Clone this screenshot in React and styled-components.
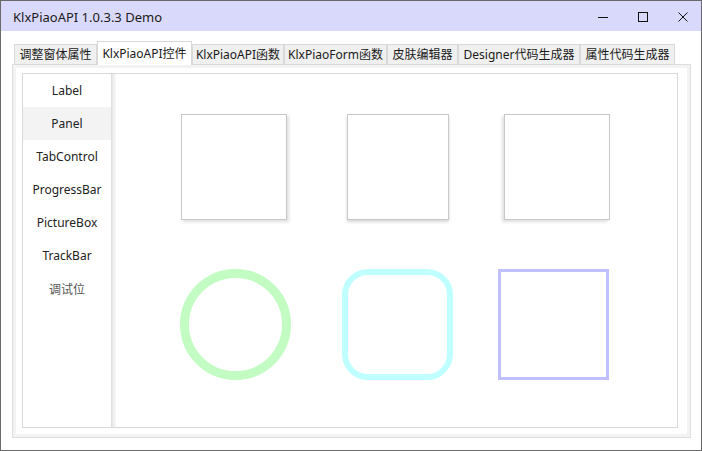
import React, { useState } from "react";
import styled, { createGlobalStyle } from "styled-components";

const GlobalStyle = createGlobalStyle`
  html, body { margin: 0; padding: 0; background: #ffffff; }
  body { font-family: "Noto Sans", "Noto Sans CJK SC", sans-serif; }
  * { box-sizing: border-box; }
`;

const Window = styled.div`
  width: 702px;
  height: 451px;
  border: 1px solid #6a6a6a;
  background: #ffffff;
  display: flex;
  flex-direction: column;
  overflow: hidden;
`;

const TitleBar = styled.div`
  height: 30px;
  flex: none;
  background: #d9d9fb;
  display: flex;
  align-items: center;
  justify-content: space-between;
  padding: 0 13px 0 12px;
`;

const Title = styled.div`
  font-size: 13px;
  line-height: 16px;
  color: #1a1a1a;
  margin-top: 1px;
`;

const Controls = styled.div`
  display: flex;
  align-items: center;
  gap: 30px;
`;

const CtrlIcon = styled.svg`
  width: 10px;
  height: 10px;
  display: block;
  margin-top: 2px;
`;

const Body = styled.div`
  flex: 1;
  display: flex;
  flex-direction: column;
  padding: 10px 0 0 11px;
`;

const TabStrip = styled.div`
  display: flex;
  align-items: flex-end;
  height: 24px;
  padding-left: 2px;
  margin-bottom: -1px;
  position: relative;
  z-index: 1;
`;

const Tab = styled.div`
  width: ${(p) => p.$w}px;
  height: ${(p) => (p.$active ? 24 : 21)}px;
  margin-right: ${(p) => p.$gap}px;
  border: 1px solid #d9d9d9;
  border-bottom: ${(p) => (p.$active ? "none" : "1px solid #d9d9d9")};
  background: ${(p) => (p.$active ? "#ffffff" : "#f0f0f0")};
  font-size: 12px;
  line-height: 16px;
  color: #1a1a1a;
  display: flex;
  justify-content: center;
  align-items: ${(p) => (p.$active ? "flex-start" : "center")};
  padding-top: ${(p) => (p.$active ? 4 : 0)}px;
  white-space: nowrap;
`;

const TabPage = styled.div`
  width: 679px;
  height: 374px;
  border: 1px solid #dedede;
  box-shadow: inset 0 0 0 3px #f3f3f3;
  background: #ffffff;
  padding: 8px 0 0 9px;
`;

const Inner = styled.div`
  width: 656px;
  height: 355px;
  border: 1px solid #d9d9d9;
  display: flex;
`;

const Sidebar = styled.div`
  width: 88px;
  flex: none;
  display: flex;
  flex-direction: column;
`;

const NavItem = styled.div`
  height: 33px;
  display: flex;
  align-items: center;
  justify-content: center;
  font-size: 12px;
  color: ${(p) => (p.$muted ? "#555" : "#222")};
  background: ${(p) => (p.$active ? "#f3f3f3" : "transparent")};
  cursor: pointer;
`;

const Divider = styled.div`
  width: 5px;
  flex: none;
  background: linear-gradient(to right, #dadada, #ededed 40%, #f8f8f8);
`;

const Canvas = styled.div`
  flex: 1;
  display: grid;
  grid-template-columns: repeat(3, 161px);
  grid-template-rows: 106px 111px;
  row-gap: 49px;
  padding: 40px 0 0 38px;
  align-content: start;
`;

const Cell = styled.div`
  display: flex;
  justify-content: center;
  transform: translateX(${(p) => p.$dx || 0}px);
`;

const Card = styled.div`
  width: ${(p) => p.$w}px;
  height: 106px;
  border: 1px solid #c8c8c8;
  background: #ffffff;
  box-shadow: ${(p) => p.$shadow};
`;

const Ring = styled.div`
  width: 111px;
  height: 111px;
  border: ${(p) => p.$bw}px solid ${(p) => p.$color};
  border-radius: ${(p) => p.$r};
`;

const tabs = [
  { t: "调整窗体属性", w: 83, gap: 0 },
  { t: "KlxPiaoAPI控件", w: 95, gap: 0 },
  { t: "KlxPiaoAPI函数", w: 92, gap: 0 },
  { t: "KlxPiaoForm函数", w: 103, gap: 0 },
  { t: "皮肤编辑器", w: 71, gap: 0 },
  { t: "Designer代码生成器", w: 122, gap: 0 },
  { t: "属性代码生成器", w: 95, gap: 0 },
];

const nav = ["Label", "Panel", "TabControl", "ProgressBar", "PictureBox", "TrackBar", "调试位"];

export default function App() {
  const [active, setActive] = useState(1);
  return (
    <>
      <GlobalStyle />
      <Window>
        <TitleBar>
          <Title>KlxPiaoAPI 1.0.3.3 Demo</Title>
          <Controls>
            <CtrlIcon viewBox="0 0 10 10">
              <line x1="0" y1="5.5" x2="10" y2="5.5" stroke="#111" strokeWidth="1" />
            </CtrlIcon>
            <CtrlIcon viewBox="0 0 10 10">
              <rect x="0.5" y="0.5" width="9" height="9" fill="none" stroke="#111" strokeWidth="1" />
            </CtrlIcon>
            <CtrlIcon viewBox="0 0 10 10">
              <path d="M0.5 0.5 L9.5 9.5 M9.5 0.5 L0.5 9.5" stroke="#111" strokeWidth="1" fill="none" />
            </CtrlIcon>
          </Controls>
        </TitleBar>
        <Body>
          <TabStrip>
            {tabs.map((tb, i) => (
              <Tab key={tb.t} $w={tb.w} $gap={tb.gap} $active={i === 1}>
                {tb.t}
              </Tab>
            ))}
          </TabStrip>
          <TabPage>
            <Inner>
              <Sidebar>
                {nav.map((n, i) => (
                  <NavItem key={n} $active={i === active} $muted={i === 6} onClick={() => setActive(i)}>
                    {n}
                  </NavItem>
                ))}
              </Sidebar>
              <Divider />
              <Canvas>
                <Cell $dx={-1}>
                  <Card $w={106} $shadow="2px 2px 3px rgba(0,0,0,0.13)" />
                </Cell>
                <Cell $dx={2}>
                  <Card $w={102} $shadow="0 2px 3px rgba(0,0,0,0.16)" />
                </Cell>
                <Cell>
                  <Card $w={106} $shadow="-2px 2px 3px rgba(0,0,0,0.13)" />
                </Cell>
                <Cell $dx={1}>
                  <Ring $bw={9} $color="#c3fcc3" $r="50%" />
                </Cell>
                <Cell $dx={2}>
                  <Ring $bw={6} $color="#c0ffff" $r="26px" />
                </Cell>
                <Cell $dx={-3}>
                  <Ring $bw={3} $color="#c0c0ff" $r="0" />
                </Cell>
              </Canvas>
            </Inner>
          </TabPage>
        </Body>
      </Window>
    </>
  );
}
